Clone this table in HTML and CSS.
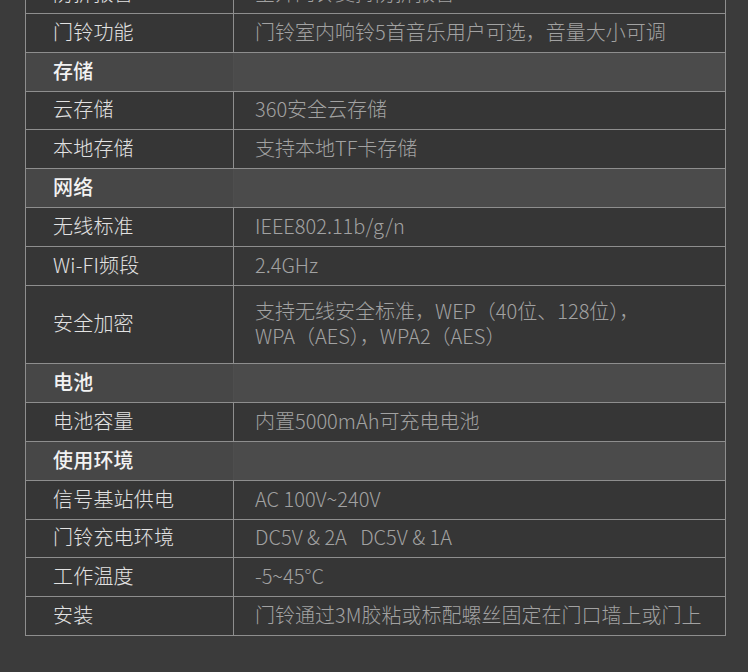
FILE: index.html
```html
<!DOCTYPE html>
<html lang="zh-CN">
<head>
<meta charset="utf-8">
<title>产品参数</title>
<link rel="stylesheet" href="styles.css">
</head>
<body>
<div class="spec">
  <div class="row"><div class="key">防拆报警</div><div class="val">全开门铃支持防拆报警</div></div>
  <div class="row"><div class="key">门铃功能</div><div class="val">门铃室内响铃5首音乐用户可选，音量大小可调</div></div>
  <div class="row group"><div class="key">存储</div><div class="val"></div></div>
  <div class="row"><div class="key">云存储</div><div class="val">360安全云存储</div></div>
  <div class="row"><div class="key">本地存储</div><div class="val">支持本地TF卡存储</div></div>
  <div class="row group"><div class="key">网络</div><div class="val"></div></div>
  <div class="row"><div class="key">无线标准</div><div class="val">IEEE802.11b/g/n</div></div>
  <div class="row"><div class="key">Wi-FI频段</div><div class="val">2.4GHz</div></div>
  <div class="row tall"><div class="key">安全加密</div><div class="val"><span class="line">支持无线安全标准，WEP（40位、128位），</span><span class="line">WPA（AES），WPA2（AES）</span></div></div>
  <div class="row group"><div class="key">电池</div><div class="val"></div></div>
  <div class="row"><div class="key">电池容量</div><div class="val">内置5000mAh可充电电池</div></div>
  <div class="row group"><div class="key">使用环境</div><div class="val"></div></div>
  <div class="row"><div class="key">信号基站供电</div><div class="val">AC 100V~240V</div></div>
  <div class="row"><div class="key">门铃充电环境</div><div class="val">DC5V &amp; 2A&nbsp;&nbsp; DC5V &amp; 1A</div></div>
  <div class="row"><div class="key">工作温度</div><div class="val">-5~45°C</div></div>
  <div class="row"><div class="key">安装</div><div class="val">门铃通过3M胶粘或标配螺丝固定在门口墙上或门上</div></div>
</div>
</body>
</html>
```

FILE: styles.css
```css
html, body {
  margin: 0;
  padding: 0;
  background: #3b3b3b;
  height: 100%;
  overflow: hidden;
}

body {
  font-family: "Noto Sans CJK SC", "Noto Sans", sans-serif;
  font-size: 20px;
}

.spec {
  width: 701px;
  margin: -25.8px 0 0 25px;
  box-sizing: border-box;
  border-left: 1px solid #8e8e8e;
  border-right: 1px solid #8e8e8e;
  border-bottom: 1px solid #8e8e8e;
  background: #363636;
}

.row {
  display: flex;
  height: 38.8px;
  box-sizing: border-box;
  border-top: 1px solid #8e8e8e;
}

.row.tall {
  height: 78.8px;
}

.key {
  width: 207px;
  flex: none;
  box-sizing: border-box;
  padding: 0 0 3px 27px;
  display: flex;
  align-items: center;
  color: #e2e2e2;
  font-weight: 300;
  letter-spacing: 0.2px;
}

.val {
  flex: 1;
  box-sizing: border-box;
  border-left: 1px solid #8e8e8e;
  padding: 0 0 3px 21px;
  display: flex;
  align-items: center;
  color: #a2a2a2;
  font-weight: 300;
}

.row.tall .val {
  flex-direction: column;
  align-items: flex-start;
  justify-content: center;
  gap: 0;
}

.line {
  display: block;
  line-height: 25px;
  height: 25px;
}

.row.group {
  background: #4b4b4b;
}

.row.group .key {
  background: #474747;
  color: #f2f2f2;
  font-weight: 500;
}

.row.group .val {
  border-left: 1px solid #4e4e4e;
}
```
